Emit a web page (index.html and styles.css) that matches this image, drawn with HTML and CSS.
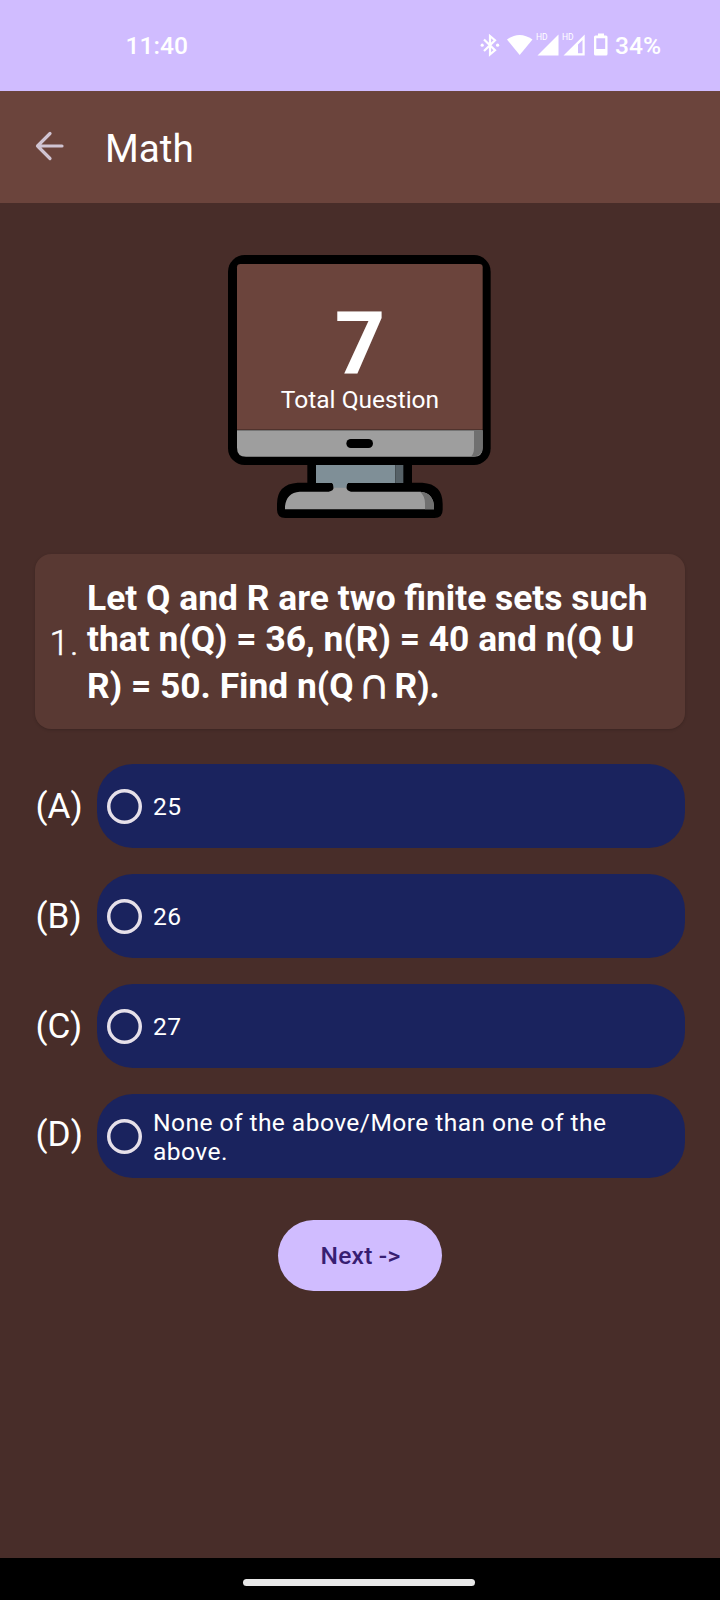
FILE: index.html
```
<!DOCTYPE html>
<html lang="en">
<head>
<meta charset="utf-8">
<title>Math</title>
<link rel="stylesheet" href="styles.css">
</head>
<body>
<div class="screen">
  <div class="status">
    <span class="time">11:40</span>
    <svg class="status-icons" viewBox="0 0 150 40" fill="#fff">
      <path fill="none" stroke="#fff" stroke-width="2.2" d="M4 12.500L15 23.300L10 27.500V9L15 13.200L4 24"/>
      <circle cx="2.200" cy="18.200" r="1.600"/><circle cx="17.600" cy="18.200" r="1.600"/>
      <path d="M27 12.500Q39.500 3.500 52.500 12.500L39.700 28Z"/>
      <path d="M78.500 7.500V28.500H57.500Z"/>
      <path fill-rule="evenodd" d="M104.700 7.500V28.500H83.500ZM102.500 13L98 17.500V26.300H102.500Z"/>
      <path fill-rule="evenodd" d="M118 6.500h6v2h2q1.500 0 1.500 1.500v17q0 1.500-1.500 1.500h-10.500q-1.500 0-1.500-1.500v-17q0-1.500 1.500-1.500h2.500zM116.300 11.300v10.700h8.900v-10.700z"/>
      <text class="hd" x="56" y="13">HD</text><text class="hd" x="82" y="13">HD</text>
    </svg>
    <span class="battery">34%</span>
  </div>
  <header class="appbar">
    <svg class="back" viewBox="0 0 30 30" fill="none" stroke="#d0c4d2" stroke-width="3.200" stroke-linecap="round" stroke-linejoin="round"><path d="M27 15H2.500M15 2.500L2.500 15L15 27.500"/></svg>
    <h1 class="title">Math</h1>
  </header>
  <main class="content">
    <div class="monitor">
      <svg class="monitor-art" viewBox="24 30 789 789">
        <rect x="24" y="30" width="788" height="630" rx="50"/>
        <path fill="#6b443c" d="M62 57H778Q788 57 788 67V554H51V67Q51 57 62 57Z"/>
        <path fill="#9e9e9e" d="M51 556H788V608Q788 635 761 635H78Q51 635 51 608Z"/>
        <path fill="#707070" d="M762 556H788V608Q788 635 752 635Q762 628 762 610Z"/>
        <rect x="379" y="582" width="80" height="27" rx="13.500"/>
        <path d="M262 655H576V713H607Q668 717 668 777V794Q668 819 643 819H196Q171 819 171 794V777Q171 717 233 713H262Z"/>
        <path fill="#7f8f97" d="M288 660H526V714H288Z"/>
        <path fill="#566167" d="M526 660H550V714H526Z"/>
        <path fill="#9e9e9e" d="M195 793V784Q199 743 239 740H326Q341 738 341 726Q341 720 337 714H383Q379 720 379 726Q380 738 393 740H600Q640 743 642 785V793Z"/>
        <path fill="#7f8f97" d="M335 712H385Q379 718 379 728H341Q341 718 335 712Z"/>
        <path fill="#707070" d="M600 740Q640 743 642 785V793H615V775Q615 753 600 740Z"/>
      </svg>
      <div class="monitor-text"><strong class="count">7</strong><span class="caption">Total Question</span></div>
    </div>
    <section class="card">
      <span class="number">1.</span>
      <p class="question"><span class="line">Let Q and R are two finite sets such</span><span class="line">that n(Q) = 36, n(R) = 40 and n(Q U</span><span class="line last">R) = 50. Find n(Q <span class="cap">∩</span> R).</span></p>
    </section>
    <div class="options">
      <div class="row"><span class="letter">(A)</span><label class="option"><span class="radio"></span><span>25</span></label></div>
      <div class="row"><span class="letter">(B)</span><label class="option"><span class="radio"></span><span>26</span></label></div>
      <div class="row"><span class="letter">(C)</span><label class="option"><span class="radio"></span><span>27</span></label></div>
      <div class="row tall"><span class="letter">(D)</span><label class="option"><span class="radio"></span><span>None of the above/More than one of the above.</span></label></div>
    </div>
    <button class="next">Next -&gt;</button>
  </main>
  <div class="navbar"><div class="handle"></div></div>
</div>
</body>
</html>
```
FILE: styles.css
```
* { box-sizing: border-box; }
body { margin: 0; font-family: Roboto, sans-serif; color: #fff; }
.screen { width: 720px; height: 1600px; display: flex; flex-direction: column; background: #482d29; overflow: hidden; }
.status { height: 91px; flex: none; display: flex; align-items: center; background: #d0bcff; font-size: 24.6px; font-weight: 500; }
.time { margin-left: 125.5px; width: 354.5px; }
.status-icons { width: 150px; height: 40px; flex: none; margin-top: 3px; }
.hd { font-size: 8.5px; font-weight: 400; }
.battery { margin-left: -15px; }
.appbar { height: 112px; flex: none; display: flex; align-items: center; background: #6b443c; padding: 0 0 0 35px; }
.back { width: 30px; height: 30px; margin-top: -2px; }
.title { margin: 2px 0 0 40px; font-size: 38.7px; font-weight: 400; }
.content { flex: 1; display: flex; flex-direction: column; align-items: center; padding-top: 52px; }
.monitor { display: grid; width: 263px; height: 263px; margin-right: 2px; }
.monitor-art, .monitor-text { grid-area: 1 / 1; }
.monitor-art { width: 263px; height: 263px; }
.monitor-text { display: flex; flex-direction: column; align-items: center; padding: 47px 0 0 2px; }
.count { font-size: 88px; line-height: 83px; height: 82.5px; font-weight: 700; }
.caption { font-size: 24.5px; line-height: 29px; }
.card { width: 650px; height: 175px; margin-top: 36px; padding: 23.5px 0 0 14.5px; display: flex; background: #593933; border-radius: 16px; box-shadow: 0 1px 3px rgba(0,0,0,.18); }
.number { width: 37.5px; flex: none; font-size: 35.2px; font-weight: 300; letter-spacing: 1px; line-height: 41px; padding-top: 45px; -webkit-text-stroke: .5px #fff; }
.question { margin: 0; font-size: 35.4px; font-weight: 700; white-space: nowrap; }
.line { display: block; height: 41.5px; line-height: 40px; }
.last { line-height: 51px; }
.cap { font-family: "Noto Sans Math", "DejaVu Sans", sans-serif; font-size: 34px; font-weight: 400; line-height: 1; -webkit-text-stroke: 1.2px #fff; }
.options { width: 650px; margin-top: 35px; display: flex; flex-direction: column; gap: 26px; }
.row { display: flex; align-items: center; height: 84px; }
.letter { width: 62px; flex: none; padding: 1px 0 0 .5px; font-size: 35.2px; line-height: 41px; }
.row:nth-child(3) .letter { padding-bottom: 1px; }
.tall .letter { padding-bottom: 5px; }
.option { flex: 1; height: 84px; display: flex; align-items: center; gap: 11px; padding: 1px 60px 0 10px; border-radius: 36px; background: #1a235e; font-size: 24.6px; line-height: 29px; letter-spacing: .43px; }
.radio { width: 35px; height: 35px; flex: none; margin-top: -1px; border-radius: 50%; box-shadow: inset 0 0 0 3.5px #e6e0e9; }
.next { width: 164px; height: 71px; margin-top: 42px; padding: 0 0 0 1px; border: 0; border-radius: 36px; background: #d0bcff; color: #381e72; font: 500 24.6px Roboto, sans-serif; letter-spacing: .2px; }
.navbar { height: 42px; flex: none; background: #000; display: flex; justify-content: center; padding-top: 21px; }
.handle { width: 232px; height: 7px; border-radius: 4px; background: #e8e8e8; margin-right: 2px; }
```
